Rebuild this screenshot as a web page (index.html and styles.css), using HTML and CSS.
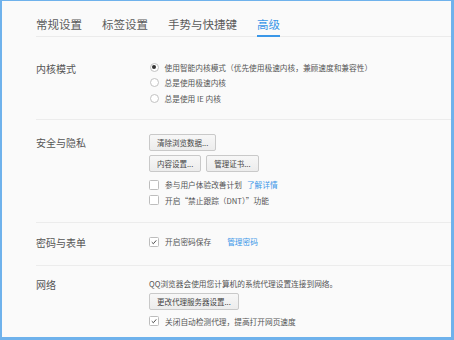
FILE: index.html
```html
<!DOCTYPE html>
<html lang="zh-CN">
<head>
  <meta charset="UTF-8">
  <title>高级设置</title>
  <link rel="stylesheet" href="styles.css">
</head>
<body>

<div class="window">
  <nav class="tabs">
    <span class="tab">常规设置</span>
    <span class="tab">标签设置</span>
    <span class="tab">手势与快捷键</span>
    <span class="tab active">高级</span>
  </nav>

  <!-- 内核模式 -->
  <section class="group group-kernel">
    <div class="group-label">内核模式</div>
    <div class="group-body">
      <div class="option"><span class="radio checked"></span>使用智能内核模式（优先使用极速内核，兼顾速度和兼容性）</div>
      <div class="option"><span class="radio"></span>总是使用极速内核</div>
      <div class="option"><span class="radio"></span>总是使用 IE 内核</div>
    </div>
  </section>

  <!-- 安全与隐私 -->
  <section class="group group-privacy">
    <div class="group-label">安全与隐私</div>
    <div class="group-body">
      <div class="btn-row"><button>清除浏览数据...</button></div>
      <div class="btn-row"><button>内容设置...</button><button>管理证书...</button></div>
      <div class="option-list">
        <div class="option"><span class="checkbox"></span>参与用户体验改善计划<a class="link">了解详情</a></div>
        <div class="option"><span class="checkbox"></span>开启“禁止跟踪（DNT）”功能</div>
      </div>
    </div>
  </section>

  <!-- 密码与表单 -->
  <section class="group group-password">
    <div class="group-label">密码与表单</div>
    <div class="group-body">
      <div class="option">
        <span class="checkbox checked"><svg viewBox="0 0 10 10"><polyline points="2.2,5.2 4.2,7.2 7.8,3"/></svg></span>开启密码保存<a class="link link-wide">管理密码</a>
      </div>
    </div>
  </section>

  <!-- 网络 -->
  <section class="group group-network">
    <div class="group-label">网络</div>
    <div class="group-body">
      <div class="note">QQ浏览器会使用您计算机的系统代理设置连接到网络。</div>
      <div class="btn-row btn-row-proxy"><button>更改代理服务器设置...</button></div>
      <div class="option option-proxy">
        <span class="checkbox checked"><svg viewBox="0 0 10 10"><polyline points="2.2,5.2 4.2,7.2 7.8,3"/></svg></span>关闭自动检测代理，提高打开网页速度
      </div>
    </div>
  </section>
</div>

</body>
</html>
```

FILE: styles.css
```css
body {
  margin: 0;
  font-family: "Noto Sans CJK SC", "Noto Sans", sans-serif;
  background-color: #fafafa;
  color: #555;
}

.window {
  width: 454px;
  height: 340px;
  box-sizing: border-box;
  border-style: solid;
  border-color: #6fb2ec;
  border-width: 1px 3px 3px 2px;
  background-color: #fafafa;
  overflow: hidden;
}

/* tabs */
.tabs {
  display: flex;
  gap: 20px;
  margin-left: 34px;
  padding-top: 16px;
  border-bottom: 1px solid #ebebeb;
}

.tab {
  font-size: 11.5px;
  line-height: 14px;
  padding-bottom: 4px;
  margin-bottom: -1px;
  border-bottom: 2px solid transparent;
  color: #5a5a5a;
}

.tab.active {
  color: #3a97e8;
  border-bottom-color: #3a97e8;
}

/* setting groups */
.group {
  display: flex;
  margin-left: 34px;
  border-bottom: 1px solid #ececec;
}

.group:last-child {
  border-bottom: none;
}

.group-kernel { padding: 22.5px 0 13px; }
.group-privacy { padding: 14px 0 14px; }
.group-password { padding: 11px 0 13.75px; }
.group-network { padding: 10.25px 0 0; }

.group-label {
  width: 113px;
  flex-shrink: 0;
  font-size: 10px;
  line-height: 15.5px;
  padding-top: 1.5px;
  color: #555;
}

.group-privacy .group-label {
  padding-top: 0;
  line-height: 17px;
}

.group-body {
  font-size: 7.7px;
  color: #555;
}

.option {
  display: flex;
  align-items: center;
  height: 15.5px;
  white-space: nowrap;
}

.option-list {
  margin-top: 4.75px;
}

.option-proxy {
  margin-top: 3.75px;
}

.note {
  height: 15.5px;
  line-height: 15.5px;
  white-space: nowrap;
}

/* radio & checkbox */
.radio {
  width: 9px;
  height: 9px;
  box-sizing: border-box;
  border: 1px solid #c2c2c2;
  border-radius: 50%;
  background-color: #fff;
  margin: 0 6px 0 0.5px;
  display: flex;
  align-items: center;
  justify-content: center;
  flex-shrink: 0;
}

.radio.checked::after {
  content: "";
  width: 4px;
  height: 4px;
  border-radius: 50%;
  background-color: #333;
}

.checkbox {
  width: 10px;
  height: 10px;
  box-sizing: border-box;
  border: 1px solid #bdbdbd;
  border-radius: 1.5px;
  background-color: #fff;
  margin-right: 6px;
  flex-shrink: 0;
  display: flex;
}

.checkbox svg {
  width: 8px;
  height: 8px;
}

.checkbox polyline {
  fill: none;
  stroke: #444;
  stroke-width: 1.2;
}

.link {
  color: #3a97e8;
  margin-left: 5px;
  cursor: pointer;
}

.link-wide {
  margin-left: 16px;
}

/* buttons */
.btn-row {
  display: flex;
  gap: 5px;
  margin-bottom: 4px;
}

.btn-row-proxy {
  margin-top: 1.25px;
  margin-bottom: 0;
}

button {
  font-family: inherit;
  font-size: 7.5px;
  line-height: 15px;
  height: 17px;
  padding: 0 7px;
  color: #444;
  background: linear-gradient(#f7f7f7, #ececec);
  border: 1px solid #c9c9c9;
  border-radius: 2px;
  cursor: pointer;
}
```
